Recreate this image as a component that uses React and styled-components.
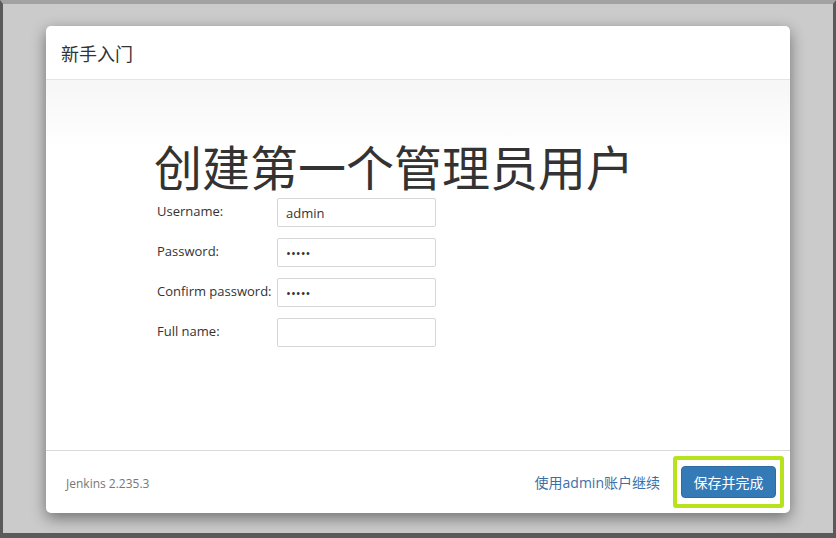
import styled, { createGlobalStyle } from "styled-components";

const GlobalStyle = createGlobalStyle`
  html, body {
    margin: 0;
    padding: 0;
    background: #cbcbcb;
  }
  body {
    font-family: "Open Sans", "Noto Sans CJK SC", sans-serif;
    color: #333;
  }
`;

const fields = [
  { label: "Username:", type: "text", value: "admin" },
  { label: "Password:", type: "password", value: "admin" },
  { label: "Confirm password:", type: "password", value: "admin" },
  { label: "Full name:", type: "text", value: "" },
];

const App = () => {
  return (
    <>
      <GlobalStyle />
      <Frame>
        <Modal>
          <Header>
            <Title>新手入门</Title>
          </Header>
          <Body>
            <Heading>创建第一个管理员用户</Heading>
            <Form>
              {fields.map((f) => (
                <Row key={f.label}>
                  <Label>{f.label}</Label>
                  <Input type={f.type} defaultValue={f.value} readOnly />
                </Row>
              ))}
            </Form>
          </Body>
          <Footer>
            <Version>Jenkins 2.235.3</Version>
            <Actions>
              <Link href="#">使用admin账户继续</Link>
              <Highlight>
                <Button type="button">保存并完成</Button>
              </Highlight>
            </Actions>
          </Footer>
        </Modal>
      </Frame>
    </>
  );
};

export default App;

const Frame = styled.div`
  width: 836px;
  height: 538px;
  box-sizing: border-box;
  border-top: 4px solid #a2a2a2;
  border-left: 3px solid #5a5a5a;
  border-right: 3px solid #5a5a5a;
  border-bottom: 5px solid #5a5a5a;
  background: #cbcbcb;
  padding: 22px 0 0 43px;
`;

const Modal = styled.div`
  width: 744px;
  height: 487px;
  background: #fff;
  border-radius: 5px;
  box-shadow: 0 5px 15px rgba(0, 0, 0, 0.45);
  display: flex;
  flex-direction: column;
  overflow: hidden;
`;

const Header = styled.div`
  height: 54px;
  box-sizing: border-box;
  border-bottom: 1px solid #e5e5e5;
  display: flex;
  align-items: center;
  padding: 0 15px;
`;

const Title = styled.h4`
  margin: 0;
  font-size: 18px;
  font-weight: 400;
  color: #333;
  font-family: "Noto Sans CJK SC", sans-serif;
`;

const Body = styled.div`
  flex: 1;
  background: linear-gradient(#f6f6f6, #ffffff 70px);
  padding: 57px 0 0 108px;
`;

const Heading = styled.h1`
  margin: 0 0 5px;
  font-family: "Noto Sans CJK SC", sans-serif;
  font-size: 48px;
  font-weight: 400;
  line-height: 56px;
  color: #333;
`;

const Form = styled.div`
  display: flex;
  flex-direction: column;
  gap: 11px;
  padding-left: 3px;
`;

const Row = styled.div`
  display: flex;
  align-items: center;
`;

const Label = styled.label`
  width: 120px;
  font-size: 13px;
  color: #333;
  margin-top: -3px;
`;

const Input = styled.input`
  width: 159px;
  height: 29px;
  box-sizing: border-box;
  border: 1px solid #d6d6d6;
  border-radius: 2px;
  padding: 0 8px;
  font-family: "Open Sans", sans-serif;
  font-size: 13px;
  color: #333;
  background: #fff;
  outline: none;
`;

const Footer = styled.div`
  height: 63px;
  box-sizing: border-box;
  border-top: 1px solid #d9d9d9;
  display: flex;
  align-items: center;
  justify-content: space-between;
  padding: 0 6px 0 20px;
`;

const Version = styled.span`
  font-size: 12px;
  color: #777;
  margin-top: 3px;
`;

const Actions = styled.div`
  display: flex;
  align-items: center;
  gap: 13px;
`;

const Link = styled.a`
  font-family: "Open Sans", "Noto Sans CJK SC", sans-serif;
  font-size: 14px;
  color: #3c6fa5;
  text-decoration: none;
`;

const Highlight = styled.div`
  border: 4px solid #b6e31c;
  border-radius: 3px;
  padding: 6px 4px;
  display: flex;
`;

const Button = styled.button`
  width: 95px;
  height: 32px;
  border: 1px solid #2e6da4;
  border-radius: 4px;
  background: #337ab7;
  color: #fff;
  font-family: "Noto Sans CJK SC", sans-serif;
  font-size: 14px;
  padding: 0;
  cursor: pointer;
`;
